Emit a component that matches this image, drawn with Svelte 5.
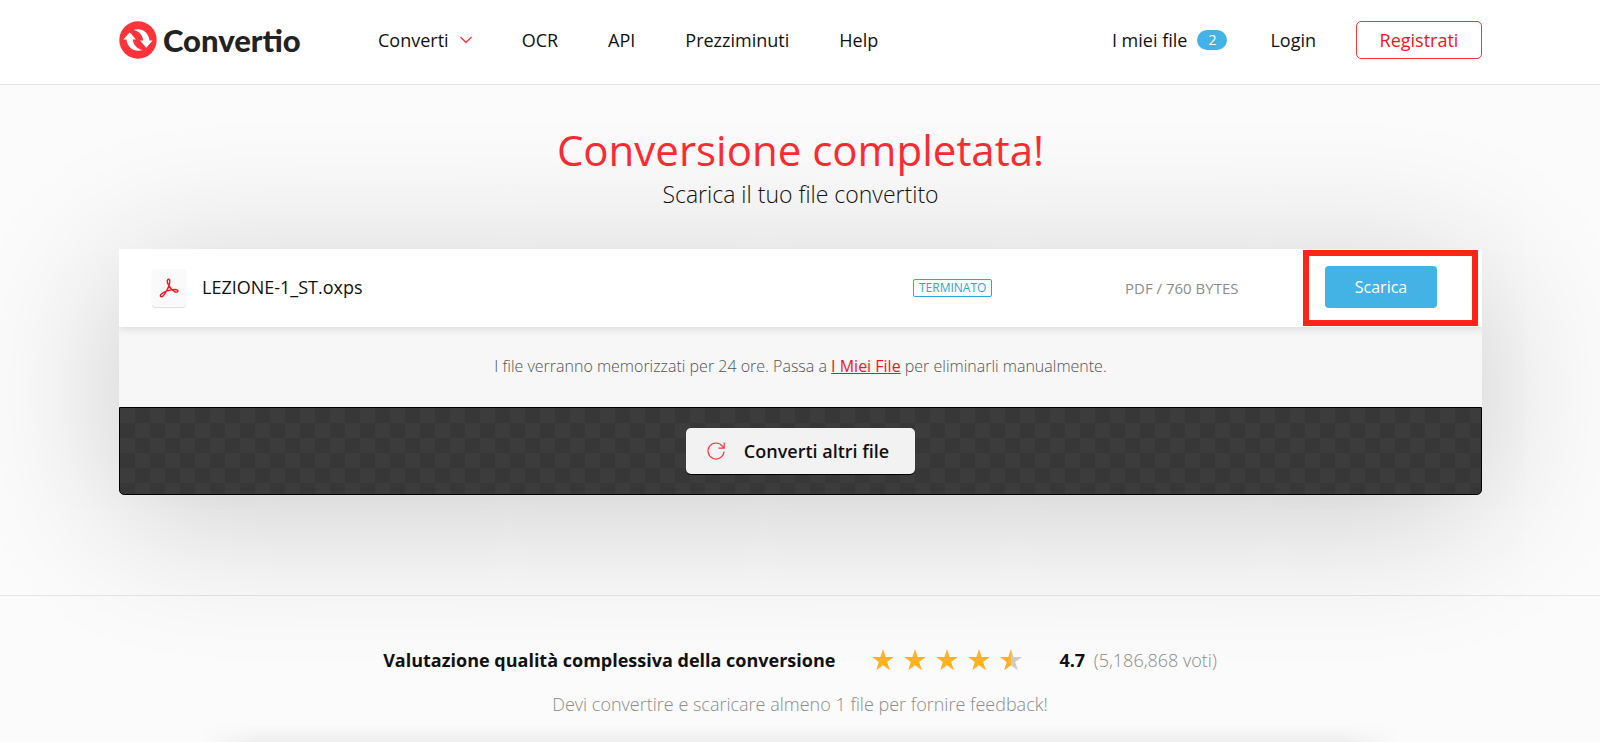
<script>
    const links = ['OCR', 'API', 'Prezziminuti', 'Help'];

    const file = {
        name: 'LEZIONE-1_ST.oxps',
        status: 'TERMINATO',
        info: 'PDF / 760 BYTES'
    };

    const rating = { score: '4.7', votes: '5,186,868' };
    const stars = [1, 1, 1, 1, 0.5];
    const starPath = 'M11 0l2.6 8H22l-6.8 5 2.6 8.2L11 16.2l-6.8 5L6.800 13 0 8h8.400z';
</script>

<header class="topbar">
    <a class="logo" href="/">
        <svg width="38" height="38" viewBox="0 0 38 38" aria-hidden="true">
            <circle cx="19" cy="19" r="18.700" fill="#ff333a" />
            <path fill="#fff" d="M10.700 11.200l6.300 7.300h-3.200c.7 5.300 3.700 9.200 9.700 10.500-7.500 2.800-15.300-2-16-10.500H4.400z" />
            <path fill="#fff" d="M27.300 26.800L21 19.500h3.200C23.500 14.200 20.500 10.300 14.500 9c7.500-2.800 15.300 2 16 10.500h3.100z" />
        </svg>
        <span>Convertio</span>
    </a>
    <nav class="menu">
        <a class="menu-drop" href="/formats">
            Converti
            <svg width="12" height="8" viewBox="0 0 12 8" aria-hidden="true">
                <path d="M.5 1L6 6.500 11.500 1" fill="none" stroke="#ff333a" stroke-width="1.300" />
            </svg>
        </a>
        {#each links as link}
            <a href="/{link.toLowerCase()}">{link}</a>
        {/each}
    </nav>
    <div class="account">
        <a class="my-files" href="/my-files">I miei file <span class="count">2</span></a>
        <a href="/login">Login</a>
        <button class="register">Registrati</button>
    </div>
</header>

<main>
    <h1>Conversione completata!</h1>
    <p class="subtitle">Scarica il tuo file convertito</p>

    <section class="card">
        <div class="file-row">
            <div class="file">
                <span class="file-icon">
                    <svg width="20" height="20" viewBox="0 0 20 20" aria-hidden="true">
                        <path
                            d="M9.600 1.200c-1.500 0-1.700 2.400-.7 4.600 1.400 3.200 3.700 6.100 6.500 7.800 1.600.9 3.400.7 3.500-.5.100-1.300-2.400-1.800-5.200-1.500-3.600.3-7 1.500-9.800 3.200-1.700 1-3 2.400-2.400 3.500.7 1.100 2.500.2 3.900-2 2.200-3.300 4.700-8 5.200-11.500.3-2 .3-3.600-1-3.600z"
                            fill="none" stroke="#f5141c" stroke-width="1.400" />
                    </svg>
                </span>
                <span class="file-name">{file.name}</span>
            </div>
            <div><span class="status">{file.status}</span></div>
            <div class="info">{file.info}</div>
            <div class="action">
                <button class="download">Scarica</button>
            </div>
        </div>

        <p class="note">
            I file verranno memorizzati per 24 ore. Passa a <a href="/my-files">I Miei File</a> per eliminarli manualmente.
        </p>

        <div class="card-footer">
            <button class="restart">
                <svg width="20" height="20" viewBox="0 0 20 20" aria-hidden="true">
                    <path d="M18 10.500a8 8 0 1 1-1.500-5.200L18 7M18.200 1.500V7.200H12.500" fill="none" stroke="#ff333a" stroke-width="1.200" />
                </svg>
                Converti altri file
            </button>
        </div>
    </section>
</main>

<footer>
    <div class="rating">
        <strong>Valutazione qualità complessiva della conversione</strong>
        <div class="stars" role="img" aria-label={rating.score}>
            {#each stars as fill}
                <svg width="22" height="22" viewBox="0 0 22 22">
                    <path d={starPath} fill={fill < 1 ? '#cbcbcb' : '#ffb128'} />
                    {#if fill < 1}
                        <path d="M11 0v16.200l-6.800 5L6.800 13 0 8h8.400z" fill="#ffb128" />
                    {/if}
                </svg>
            {/each}
        </div>
        <div class="score"><b>{rating.score}</b> <span>({rating.votes} voti)</span></div>
    </div>
    <p class="feedback">Devi convertire e scaricare almeno 1 file per fornire feedback!</p>
    <div class="next-shadow"></div>
</footer>

<style>
    :global(body) {
        background: #fbfbfb;
        color: #111;
        font-family: "Open Sans", sans-serif;
        font-size: 18px;
    }

    a {
        color: inherit;
        text-decoration: none;
    }

    button {
        font: inherit;
        cursor: pointer;
    }

    h1, p {
        margin: 0;
        text-align: center;
    }

    .topbar {
        position: relative;
        z-index: 1;
        display: flex;
        align-items: center;
        height: 84px;
        padding: 0 118px 4px 119px;
        box-sizing: border-box;
        background: #fff;
        box-shadow: 0 1px 0 #e3e3e3;
    }

    .logo {
        display: flex;
        align-items: center;
        gap: 6px;
        width: 259px;
        color: #222;
        font: 900 31px/38px Lato, sans-serif;
    }

    .menu, .account {
        display: flex;
        align-items: center;
    }

    .menu {
        flex: 1;
        gap: 50px;
    }

    .menu-drop {
        display: flex;
        align-items: center;
        gap: 11px;
    }

    .my-files {
        display: flex;
        align-items: center;
        gap: 10px;
        margin-right: 43px;
    }

    .count {
        padding: 0 11px;
        border-radius: 10px;
        background: #43b3e6;
        color: #fff;
        font-size: 14px;
        line-height: 20px;
    }

    .register {
        width: 126px;
        height: 38px;
        margin-left: 40px;
        padding: 0;
        border: 1px solid #ff333a;
        border-radius: 5px;
        background: #fff;
        color: #f5141c;
    }

    main {
        padding: 38px 118px 100px 119px;
        border-bottom: 1px solid #e6e6e6;
    }

    h1 {
        color: #ff2a31;
        font-size: 42px;
        font-weight: 400;
        line-height: 56px;
    }

    .subtitle {
        margin-bottom: 38px;
        font-size: 23px;
        font-weight: 300;
        line-height: 33px;
    }

    .card {
        border-radius: 0 0 5px 5px;
        box-shadow: 0 20px 150px rgba(0, 0, 0, 0.2);
    }

    .file-row {
        position: relative;
        display: grid;
        grid-template-columns: 1fr 212px 178px 175px;
        align-items: center;
        height: 78px;
        padding: 0 4px 0 33px;
        background: #fff;
        box-shadow: 0 2px 8px rgba(0, 0, 0, 0.12);
        clip-path: inset(0 0 -12px 0);
    }

    .file {
        display: flex;
        align-items: center;
        gap: 16px;
    }

    .file-icon {
        display: flex;
        align-items: center;
        justify-content: center;
        width: 34px;
        height: 38px;
        border-radius: 4px;
        background: #fafafa;
        box-shadow: 0 1px 1px #ddd;
    }

    .file-name {
        padding-bottom: 2px;
    }

    .status {
        display: block;
        width: fit-content;
        padding: 0 5px;
        border: 1px solid #2ba6de;
        border-radius: 2px;
        color: #2ba6de;
        font-size: 12px;
        line-height: 16px;
    }

    .info {
        color: #8c8c8c;
        font-size: 15px;
    }

    .action {
        height: 76px;
        padding: 10px 16px;
        border: 6px solid #ff2418;
        box-sizing: border-box;
    }

    .download {
        width: 112px;
        height: 42px;
        padding: 0;
        border: 0;
        border-radius: 4px;
        background: #43b3e6;
        color: #fff;
        font-size: 16px;
    }

    .note {
        padding: 27px 0 29px;
        background: #f7f7f7;
        color: #555;
        font-size: 16px;
        font-weight: 300;
        line-height: 24px;
    }

    .note a {
        color: #f5141c;
        font-weight: 400;
        text-decoration: underline;
    }

    .card-footer {
        display: flex;
        justify-content: center;
        padding: 20px 0;
        border: 1px solid #000;
        border-radius: 0 0 5px 5px;
        background: repeating-conic-gradient(#373737 0 25%, #3c3c3c 0 50%) 0 0 / 30px 30px;
    }

    .restart {
        display: flex;
        align-items: center;
        gap: 18px;
        height: 46px;
        padding: 0 26px 0 20px;
        border: 0;
        border-radius: 5px;
        background: #f2f2f2;
        box-shadow: 0 1px 0 #000;
        color: #111;
        font-weight: 600;
    }

    footer {
        padding-top: 50px;
    }

    .rating {
        display: flex;
        align-items: center;
        justify-content: center;
        gap: 37px;
        line-height: 28px;
    }

    .rating strong {
        font-weight: 700;
    }

    .stars {
        display: flex;
        gap: 10px;
    }

    .score span {
        margin-left: 4px;
        color: #8c8c8c;
        font-weight: 300;
    }

    .feedback {
        padding-top: 16px;
        color: #8c8c8c;
        font-weight: 300;
        line-height: 28px;
    }

    .next-shadow {
        height: 18px;
        margin: 6px 200px 0;
        background: linear-gradient(transparent, rgba(0, 0, 0, 0.05));
        mask-image: linear-gradient(90deg, transparent, #000 60px, #000 calc(100% - 60px), transparent);
    }
</style>
